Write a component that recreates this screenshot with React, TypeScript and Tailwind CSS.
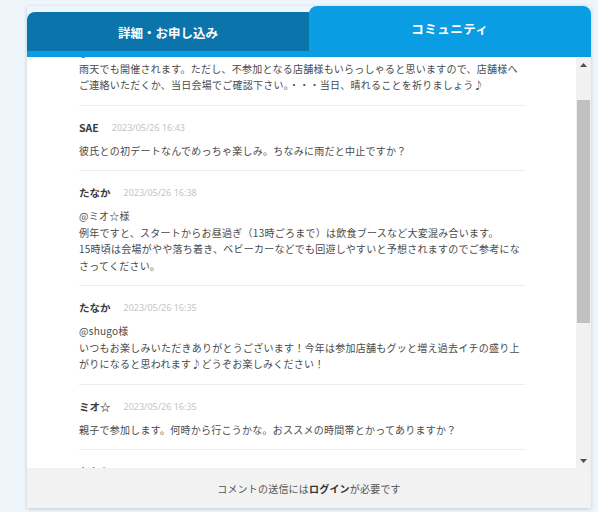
import { useLayoutEffect, useRef } from 'react';

type Comment = {
  name: string;
  date: string;
  lines: string[];
};

const comments: Comment[] = [
  {
    name: 'たなか',
    date: '2023/05/26 16:50',
    lines: [
      '@SAE様',
      '雨天でも開催されます。ただし、不参加となる店舗様もいらっしゃると思いますので、店舗様へ',
      'ご連絡いただくか、当日会場でご確認下さい。・・・当日、晴れることを祈りましょう♪',
    ],
  },
  {
    name: 'SAE',
    date: '2023/05/26 16:43',
    lines: ['彼氏との初デートなんでめっちゃ楽しみ。ちなみに雨だと中止ですか？'],
  },
  {
    name: 'たなか',
    date: '2023/05/26 16:38',
    lines: [
      '@ミオ☆様',
      '例年ですと、スタートからお昼過ぎ（13時ごろまで）は飲食ブースなど大変混み合います。',
      '15時頃は会場がやや落ち着き、ベビーカーなどでも回遊しやすいと予想されますのでご参考にな',
      'さってください。',
    ],
  },
  {
    name: 'たなか',
    date: '2023/05/26 16:35',
    lines: [
      '@shugo様',
      'いつもお楽しみいただきありがとうございます！今年は参加店舗もグッと増え過去イチの盛り上',
      'がりになると思われます♪どうぞお楽しみください！',
    ],
  },
  {
    name: 'ミオ☆',
    date: '2023/05/26 16:35',
    lines: ['親子で参加します。何時から行こうかな。おススメの時間帯とかってありますか？'],
  },
  {
    name: 'たなか',
    date: '2023/05/26 16:30',
    lines: ['@ミオ☆様', 'お問い合わせありがとうございます。'],
  },
];

function CommentItem({ comment }: { comment: Comment }) {
  return (
    <div className="border-b border-[#ececec] pt-[14px] pb-[11px]">
      <div className="flex items-center h-[16px] gap-[13px]">
        <span className="text-[10.5px] font-bold text-[#3a3a3a]">{comment.name}</span>
        <span className="text-[9px] text-[#c4c4c4] font-['Noto_Sans',sans-serif]">{comment.date}</span>
      </div>
      <div className="mt-[7px] text-[10px] leading-[16.5px] tracking-[0.25px] text-[#4a4a4a]">
        {comment.lines.map((line, i) => (
          <div key={i} className="whitespace-nowrap">
            {line}
          </div>
        ))}
      </div>
    </div>
  );
}

function Scrollbar() {
  return (
    <div className="w-[15px] flex flex-col bg-[#f1f1f1]">
      <div className="h-[15px] flex items-center justify-center">
        <svg width="7" height="4" viewBox="0 0 7 4">
          <path d="M0 4 L3.5 0 L7 4 Z" fill="#505050" />
        </svg>
      </div>
      <div className="flex-1 px-[1px] pt-[28px] pb-[130px]">
        <div className="h-full bg-[#c1c1c1]" />
      </div>
      <div className="h-[15px] flex items-center justify-center">
        <svg width="7" height="4" viewBox="0 0 7 4">
          <path d="M0 0 L7 0 L3.5 4 Z" fill="#505050" />
        </svg>
      </div>
    </div>
  );
}

export default function App() {
  const listRef = useRef<HTMLDivElement>(null);

  useLayoutEffect(() => {
    if (listRef.current) listRef.current.scrollTop = 50;
  }, []);

  return (
    <div className="min-h-[512px] bg-[#eff6fb] pt-[6px] pl-[27px] font-['Noto_Sans_CJK_JP','Noto_Sans',sans-serif]">
      <div className="w-[564px] shadow-[0_1px_4px_rgba(0,0,0,0.18)]">
        {/* Tabs */}
        <div className="flex items-end h-[51px]">
          <div className="flex-1 flex flex-col">
            <div className="h-[39px] bg-[#0b74aa] rounded-tl-[8px] flex items-center justify-center pt-[3px]">
              <span className="text-[12.5px] font-bold text-white">詳細・お申し込み</span>
            </div>
            <div className="h-[6px] bg-[#0a9de3]" />
          </div>
          <div className="w-[282px] h-[51px] bg-[#0a9de3] rounded-t-[8px] flex items-center justify-center pb-[5px]">
            <span className="text-[12.5px] font-bold text-white tracking-[0.5px]">コミュニティ</span>
          </div>
        </div>

        {/* Comment list */}
        <div className="flex h-[411px] bg-white">
          <div ref={listRef} className="flex-1 overflow-hidden px-[52px] pr-[51px]">
            {comments.map((c, i) => (
              <CommentItem key={i} comment={c} />
            ))}
          </div>
          <Scrollbar />
        </div>

        {/* Footer */}
        <div className="h-[40px] bg-[#f2f2f2] flex items-center justify-center">
          <span className="text-[10px] tracking-[0.2px] text-[#555]">
            コメントの送信には<span className="font-bold text-[#333]">ログイン</span>が必要です
          </span>
        </div>
      </div>
    </div>
  );
}
